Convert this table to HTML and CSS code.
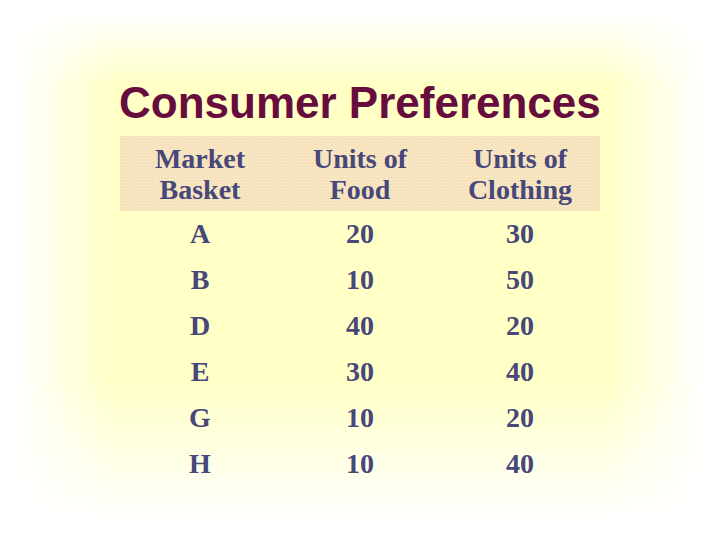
FILE: index.html
```html
<!DOCTYPE html>
<html>
<head>
<meta charset="utf-8">
<link rel="stylesheet" href="styles.css">
</head>
<body>
<div class="slide">
  <h1 class="title">Consumer Preferences</h1>
  <table class="prefs">
    <thead>
      <tr class="head">
        <th>Market<br>Basket</th>
        <th>Units of<br>Food</th>
        <th>Units of<br>Clothing</th>
      </tr>
    </thead>
    <tbody>
      <tr><td>A</td><td>20</td><td>30</td></tr>
      <tr><td>B</td><td>10</td><td>50</td></tr>
      <tr><td>D</td><td>40</td><td>20</td></tr>
      <tr><td>E</td><td>30</td><td>40</td></tr>
      <tr><td>G</td><td>10</td><td>20</td></tr>
      <tr><td>H</td><td>10</td><td>40</td></tr>
    </tbody>
  </table>
</div>
</body>
</html>
```
FILE: styles.css
```css
html, body {
  margin: 0;
  padding: 0;
  width: 720px;
  height: 540px;
  overflow: hidden;
}

.slide {
  box-sizing: border-box;
  width: 720px;
  height: 540px;
  padding: 78px 0 0 119px;
  background-color: #ffffc6;
  background-image:
    linear-gradient(to right, #ffffff 0px, #ffffff 15px, rgba(255,255,255,0) 115px, rgba(255,255,255,0) 605px, #ffffff 705px, #ffffff 720px),
    linear-gradient(to bottom, #ffffff 0px, #ffffff 12px, rgba(255,255,255,0) 85px, rgba(255,255,255,0) 380px, #ffffff 520px, #ffffff 540px);
}

.title {
  margin: 0;
  font-family: "Liberation Sans", Arial, sans-serif;
  font-weight: bold;
  font-size: 44px;
  line-height: normal;
  color: #660d3d;
}

.prefs {
  margin-top: 8px;
  margin-left: 1px;
  border-collapse: collapse;
  font-family: "Liberation Serif", "Times New Roman", serif;
  font-weight: bold;
  font-size: 28px;
  color: #47477a;
}

.prefs th,
.prefs td {
  width: 160px;
  padding: 0;
  text-align: center;
  font-weight: bold;
  line-height: 31px;
}

.head th {
  padding: 7px 0 6px;
  background-color: #f6e3bd;
  background-image: radial-gradient(circle, #fbefd2 0.8px, transparent 1px);
  background-size: 3px 3px;
}

.prefs td {
  padding: 7px 0 8px;
}
```
